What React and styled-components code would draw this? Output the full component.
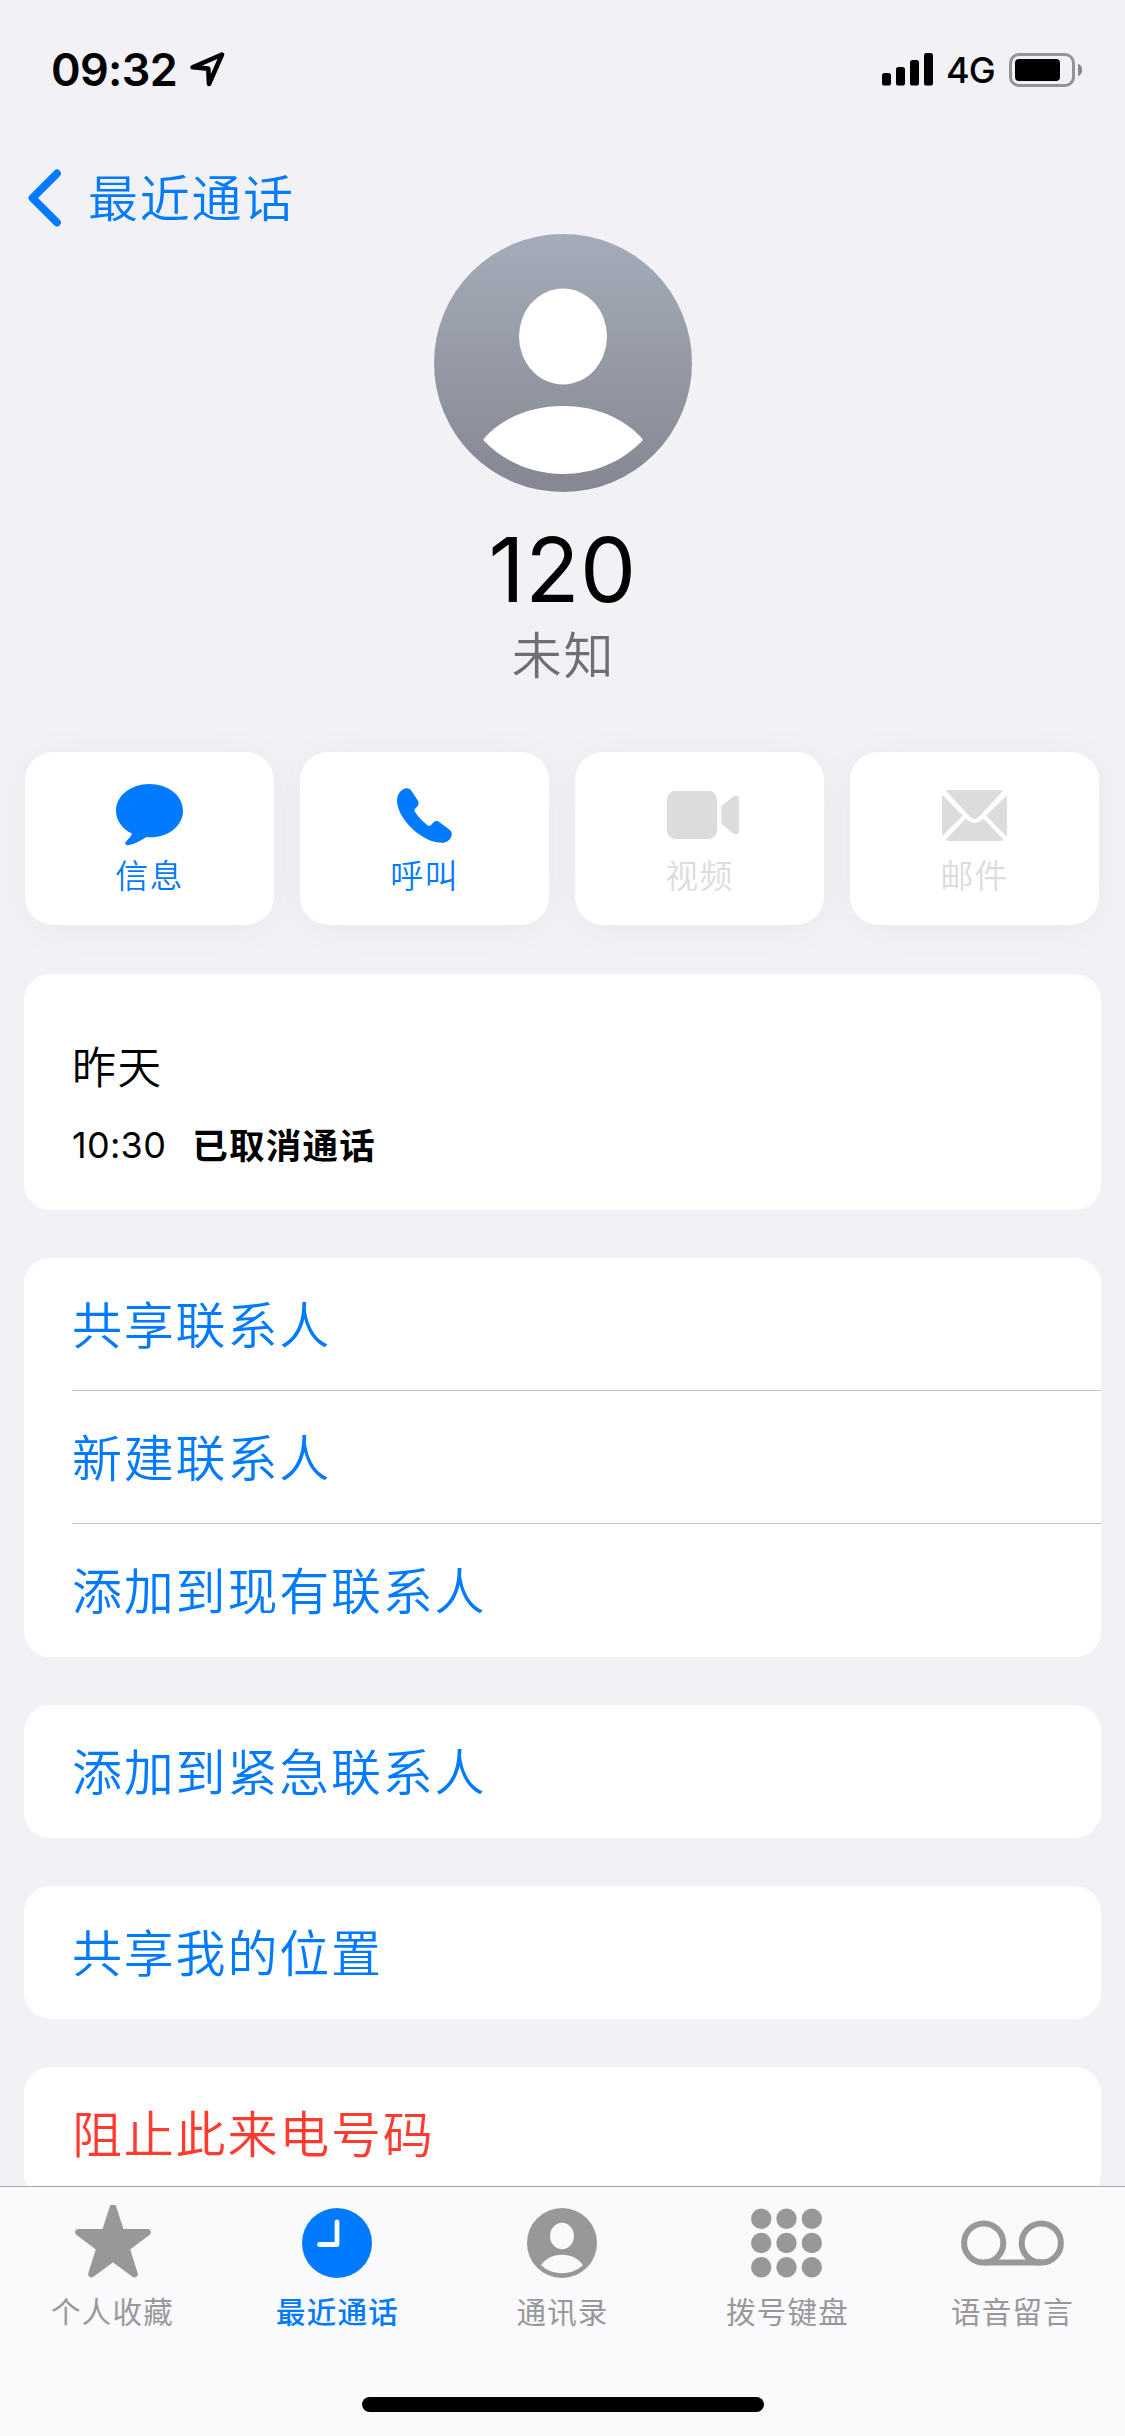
import React from "react"
import styled, { createGlobalStyle } from "styled-components"

const actions = [
  { label: "信息", icon: <MessageIcon /> },
  { label: "呼叫", icon: <PhoneIcon /> },
  { label: "视频", icon: <VideoIcon />, disabled: true },
  { label: "邮件", icon: <MailIcon />, disabled: true },
]

const groups = [
  ["共享联系人", "新建联系人", "添加到现有联系人"],
  ["添加到紧急联系人"],
  ["共享我的位置"],
]

const tabs = [
  { label: "个人收藏", icon: <StarIcon /> },
  { label: "最近通话", icon: <ClockIcon />, active: true },
  { label: "通讯录", icon: <ContactIcon /> },
  { label: "拨号键盘", icon: <KeypadIcon /> },
  { label: "语音留言", icon: <VoicemailIcon /> },
]

export default function App() {
  return (
    <Page>
      <GlobalStyle />
      <StatusBar>
        <Time>09:32</Time>
        <LocationIcon />
        <Status>
          <SignalIcon />
          <Network>4G</Network>
          <BatteryIcon />
        </Status>
      </StatusBar>
      <Content>
        <NavBar>
          <BackIcon />
          <BackText>最近通话</BackText>
        </NavBar>
        <Profile>
          <Avatar />
          <Name>120</Name>
          <Subtitle>未知</Subtitle>
        </Profile>
        <Actions>
          {actions.map((item) => (
            <ActionButton key={item.label} $disabled={item.disabled}>
              <ActionIcon>{item.icon}</ActionIcon>
              <span>{item.label}</span>
            </ActionButton>
          ))}
        </Actions>
        <Cards>
          <HistoryCard>
            <Day>昨天</Day>
            <Call>
              <span>10:30</span>
              <b>已取消通话</b>
            </Call>
          </HistoryCard>
          {groups.map((rows) => (
            <Card key={rows[0]}>
              {rows.map((row) => (
                <Row key={row}>{row}</Row>
              ))}
            </Card>
          ))}
          <Card>
            <Row $danger>阻止此来电号码</Row>
          </Card>
        </Cards>
      </Content>
      <TabBar>
        <Tabs>
          {tabs.map((tab) => (
            <Tab key={tab.label} $active={tab.active}>
              {tab.icon}
              <span>{tab.label}</span>
            </Tab>
          ))}
        </Tabs>
        <HomeIndicator />
      </TabBar>
    </Page>
  )
}

function LocationIcon() {
  return (
    <svg width="37" height="37" viewBox="0 0 37 37" fill="none">
      <path
        d="M33 3.500 3.500 16.300 19.300 17.600 20 33Z"
        stroke="#000"
        strokeWidth="4.600"
        strokeLinejoin="round"
      />
    </svg>
  )
}

function SignalIcon() {
  return (
    <svg width="51" height="33" viewBox="0 0 51 33">
      <rect x="0" y="20" width="9" height="12.500" rx="2.600" />
      <rect x="14" y="14" width="9" height="18.500" rx="2.600" />
      <rect x="28" y="7" width="9" height="25.500" rx="2.600" />
      <rect x="42" y="0" width="9" height="32.500" rx="2.600" />
    </svg>
  )
}

function BatteryIcon() {
  return (
    <svg width="73" height="34" viewBox="0 0 73 34">
      <rect
        x="1.500"
        y="1.500"
        width="63"
        height="31"
        rx="8.500"
        fill="none"
        stroke="#949498"
        strokeWidth="3"
      />
      <rect x="6" y="6" width="45" height="22" rx="4" />
      <path d="M69 10.800c2.700 1 4.200 3.200 4.200 6.200s-1.500 5.200-4.200 6.200z" fill="#8a8a8e" />
    </svg>
  )
}

function BackIcon() {
  return (
    <svg width="34" height="58" viewBox="0 0 34 58" fill="none">
      <path
        d="M30 4.500 5.500 29 30 53.500"
        stroke="#007aff"
        strokeWidth="7.800"
        strokeLinecap="round"
        strokeLinejoin="round"
      />
    </svg>
  )
}

function Avatar() {
  return (
    <svg width="258" height="258" viewBox="0 0 258 258">
      <defs>
        <linearGradient id="avatar" x1="0" y1="0" x2="0" y2="1">
          <stop offset="0" stopColor="#a5abb9" />
          <stop offset="1" stopColor="#858892" />
        </linearGradient>
      </defs>
      <circle cx="129" cy="129" r="129" fill="url(#avatar)" />
      <ellipse cx="129" cy="102.500" rx="44" ry="48" fill="#fff" />
      <path
        d="M50.200 204.200C69 183.500 97 172 129 172s60 11.500 79 32.200q1.200 1.500 0 2.800C187 228.500 159 240 129 240s-58-11.500-78.800-33q-1.200-1.300 0-2.800z"
        fill="#fff"
      />
    </svg>
  )
}

function MessageIcon() {
  return (
    <svg width="67" height="62" viewBox="0 0 67 62" fill="currentColor">
      <path d="M33.500 0C52 0 67 11.600 67 26.700S52.500 53.300 34 53.300c-1.400 0-2.700 0-3.900-.2-5.500 3.700-12 7.400-18 8.100-3 .3-3.500-1.900-2-3.600 2.400-2.600 4.800-5 5.900-8C6.300 44.800 0 36.500 0 26.700 0 11.600 15 0 33.500 0z" />
    </svg>
  )
}

function PhoneIcon() {
  return (
    <svg width="55" height="55" viewBox="0 0 55 55" fill="currentColor">
      <path d="M5 2C8.300-.5 12-.5 14.200 2.400l6.300 9.700c1.700 2.600 1.500 4.500-.3 6.500l-2 2.200c-1 1-1 1.800-.3 3 3.200 5 7.800 10 12.500 13.400 1.200.8 2.400.9 3.300 0l2.400-2.400c2-2 4-2.400 6.500-.6l9.700 7.300c2.700 2 3 4.800 1.700 7.800-2 4.400-6.500 6-11.600 5.300C22 52.500.7 29.500 0 13.500-.2 8.500 1.500 4.700 5 2z" />
    </svg>
  )
}

function VideoIcon() {
  return (
    <svg width="79" height="48" viewBox="-7 0 79 48" fill="currentColor">
      <rect x="0" y="0" width="50" height="48" rx="8.500" />
      <path d="M54.300 17.500c0-1.600.6-2.800 1.700-3.700L66 5.700C68.500 3.800 72 4.700 72 7.800v32.400c0 3.100-3.500 4-6 2.100L56 34c-1.100-.9-1.700-2-1.700-3.600z" />
    </svg>
  )
}

function MailIcon() {
  return (
    <svg width="65" height="51" viewBox="0 0 65 51" fill="currentColor">
      <path d="M4 .800Q5 0 6.500 0h52Q60 0 61 .800L37.300 26.500c-3 3.200-6.600 3.200-9.600 0z" />
      <path d="M0 4.600 20.800 25.700 0 46.200z" />
      <path d="M65 5.200 44 25.700 65 46.800z" />
      <path d="M23.800 28.600c5.500 5.800 12 5.800 17.500 0L61.500 49.500Q60.500 51 58.500 51h-52Q4.500 51 3.800 49.500z" />
    </svg>
  )
}

function StarIcon() {
  return (
    <svg width="76" height="74" viewBox="0 2 76 74">
      <path
        d="M38 3.400 46 28 72.500 28.300 51.400 44.200 59.500 70 38 54.300 16.500 70 24.600 44.200 3.500 28.300 30 28Z"
        fill="currentColor"
        stroke="currentColor"
        strokeWidth="6.600"
        strokeLinejoin="round"
      />
    </svg>
  )
}

function ClockIcon() {
  return (
    <svg width="71" height="70" viewBox="0 0 71 70">
      <circle cx="35" cy="35" r="35" fill="currentColor" />
      <path
        d="M35 14V36.500H17.500"
        fill="none"
        stroke="#fafafc"
        strokeWidth="4.800"
        strokeLinecap="round"
        strokeLinejoin="round"
      />
    </svg>
  )
}

function ContactIcon() {
  return (
    <svg width="71" height="70" viewBox="0 0 71 70">
      <circle cx="35" cy="35" r="35" fill="currentColor" />
      <ellipse cx="35" cy="28" rx="12" ry="13.200" fill="#fafafc" />
      <path
        d="M14 57C18.500 50.500 26 46.700 35 46.700S51.500 50.500 56 57C51 62 43.500 65.200 35 65.200S19 62 14 57z"
        fill="#fafafc"
      />
    </svg>
  )
}

function KeypadIcon() {
  return (
    <svg width="73" height="69" viewBox="0 0 73 69" fill="currentColor">
      {[10.300, 34.500, 58.700].map((y) =>
        [10.200, 35.500, 60.800].map((x) => <circle key={x + y} cx={x} cy={y} r="10.200" />)
      )}
    </svg>
  )
}

function VoicemailIcon() {
  return (
    <svg width="103" height="46" viewBox="0 0 103 46" fill="none" stroke="currentColor">
      <g strokeWidth="6">
        <circle cx="22.700" cy="23" r="19.600" />
        <circle cx="80.300" cy="23" r="19.600" />
        <path d="M22.700 42.600H80.300" />
      </g>
    </svg>
  )
}

const GlobalStyle = createGlobalStyle`
  * {
    box-sizing: border-box;
  }
  body {
    margin: 0;
    background: #f1f1f6;
    font-family: Inter, "Noto Sans CJK SC", sans-serif;
  }
  svg {
    display: block;
    flex-shrink: 0;
  }
`

const Page = styled.div`
  width: 1125px;
  height: 2436px;
  display: flex;
  flex-direction: column;
  overflow: hidden;
  background: #f1f1f6;
`

const StatusBar = styled.div`
  flex-shrink: 0;
  height: 139px;
  margin-bottom: 23px;
  padding: 0 43px 0 51px;
  display: flex;
  align-items: center;
`

const Time = styled.div`
  width: 138px;
  font-size: 45px;
  font-weight: 600;
  letter-spacing: -0.700px;
  white-space: nowrap;
`

const Status = styled.div`
  margin-left: auto;
  display: flex;
  align-items: center;
`

const Network = styled.div`
  width: 76px;
  padding-left: 13px;
  font-size: 36px;
  font-weight: 500;
  line-height: 38px;
  letter-spacing: -1px;
`

const Content = styled.main`
  flex: 1;
  min-height: 0;
  overflow: hidden;
`

const NavBar = styled.div`
  height: 72px;
  padding-left: 27px;
  display: flex;
  align-items: center;
`

const BackText = styled.div`
  margin-left: 27px;
  padding-top: 2px;
  color: #007aff;
  font-size: 50px;
  font-weight: 350;
  line-height: 74px;
  letter-spacing: 1.700px;
`

const Profile = styled.div`
  display: flex;
  flex-direction: column;
  align-items: center;
`

const Name = styled.div`
  margin-top: 28px;
  font-size: 89px;
  line-height: 100px;
  letter-spacing: 0.500px;
`

const Subtitle = styled.div`
  margin-top: 6px;
  padding-left: 2px;
  color: #6f6f73;
  font-size: 50px;
  font-weight: 350;
  line-height: 60px;
  letter-spacing: 1.700px;
`

const Actions = styled.div`
  margin-top: 66px;
  padding: 0 26px 0 25px;
  display: grid;
  grid-template-columns: repeat(4, 1fr);
  gap: 26px;
`

const ActionButton = styled.div`
  height: 172.500px;
  padding-top: 27px;
  display: flex;
  flex-direction: column;
  align-items: center;
  border-radius: 28px;
  background: #fff;
  box-shadow: 0 4px 40px rgba(0, 0, 0, 0.04);
  color: ${({ $disabled }) => ($disabled ? "#dcdcdd" : "#007aff")};
  font-size: 33px;
  font-weight: 350;
  line-height: 50px;
  letter-spacing: 1.300px;
`

const ActionIcon = styled.div`
  height: 72px;
  margin-right: 1px;
  display: flex;
  align-items: center;
`

const Cards = styled.div`
  margin-top: 49.500px;
  padding: 0 24px;
  display: flex;
  flex-direction: column;
  gap: 48px;
`

const Card = styled.div`
  border-radius: 26px;
  background: #fff;
`

const HistoryCard = styled(Card)`
  height: 236px;
  padding: 64px 48px 0;
`

const Day = styled.div`
  font-size: 44px;
  font-weight: 350;
  line-height: 60px;
  letter-spacing: 1.200px;
`

const Call = styled.div`
  margin-top: 20px;
  display: flex;
  gap: 26px;
  font-size: 36px;
  line-height: 55px;
  letter-spacing: 0.300px;
  b {
    font-size: 35.500px;
    font-weight: 600;
    line-height: 57px;
    letter-spacing: 1.300px;
  }
`

const Row = styled.div`
  height: 133px;
  margin-left: 48px;
  color: ${({ $danger }) => ($danger ? "#ff3b30" : "#007aff")};
  font-size: 50px;
  font-weight: 350;
  line-height: 136px;
  letter-spacing: 1.800px;
  &:not(:last-child) {
    border-bottom: 1px solid #c2c2c5;
  }
`

const TabBar = styled.div`
  flex-shrink: 0;
  height: 250px;
  border-top: 1px solid #a8a8ab;
  background: #fafafc;
`

const Tabs = styled.div`
  height: 210px;
  display: grid;
  grid-template-columns: repeat(5, 1fr);
`

const Tab = styled.div`
  display: flex;
  flex-direction: column;
  align-items: center;
  color: ${({ $active }) => ($active ? "#007aff" : "#98989a")};
  font-size: 29.500px;
  font-weight: ${({ $active }) => ($active ? 500 : 400)};
  line-height: 40px;
  letter-spacing: 1.200px;
  svg {
    height: 76px;
    margin: 18px 0 11px;
  }
`

const HomeIndicator = styled.div`
  width: 402px;
  height: 15px;
  margin: 0 auto;
  border-radius: 8px;
  background: #000;
`
